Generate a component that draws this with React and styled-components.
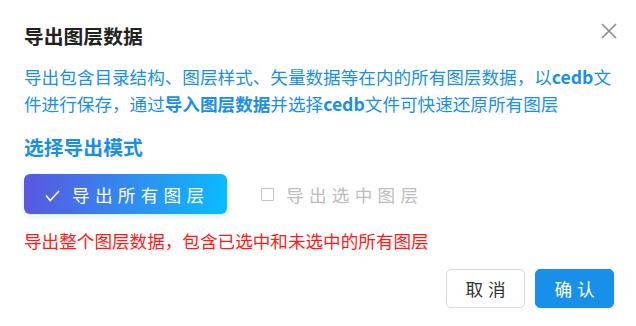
import styled, { createGlobalStyle } from "styled-components";
import { useState } from "react";

const GlobalStyle = createGlobalStyle`
  html, body {
    margin: 0;
    padding: 0;
    background: #ffffff;
  }
  body {
    font-family: "Noto Sans CJK SC", "Noto Sans", sans-serif;
  }
`;

const MODES = [
  { key: "all", label: "导出所有图层", tip: "导出整个图层数据，包含已选中和未选中的所有图层" },
  { key: "selected", label: "导出选中图层", tip: "仅导出当前选中的图层数据" },
];

const App = () => {
  const [mode, setMode] = useState("all");
  const current = MODES.find((m) => m.key === mode);

  return (
    <>
      <GlobalStyle />
      <DialogStyled>
        <Header>
          <Title>导出图层数据</Title>
          <CloseBtn aria-label="close">
            <svg width="16" height="16" viewBox="0 0 16 16">
              <path
                d="M1 1 L15 15 M15 1 L1 15"
                stroke="#8a8a8a"
                strokeWidth="1.6"
                fill="none"
              />
            </svg>
          </CloseBtn>
        </Header>

        <Desc>
          导出包含目录结构、图层样式、矢量数据等在内的所有图层数据，以<b>cedb</b>文
          <br />
          件进行保存，通过<b>导入图层数据</b>并选择<b>cedb</b>文件可快速还原所有图层
        </Desc>

        <SectionTitle>选择导出模式</SectionTitle>

        <ModeRow>
          {MODES.map((m) =>
            m.key === mode ? (
              <ModeActive key={m.key} onClick={() => setMode(m.key)}>
                <svg width="15" height="12" viewBox="0 0 15 12">
                  <path
                    d="M1 5.5 L5.2 10.5 L14 1"
                    stroke="#ffffff"
                    strokeWidth="1.6"
                    fill="none"
                  />
                </svg>
                <span>{m.label}</span>
              </ModeActive>
            ) : (
              <ModeOption key={m.key} onClick={() => setMode(m.key)}>
                <CheckBox />
                <span>{m.label}</span>
              </ModeOption>
            )
          )}
        </ModeRow>

        <Tip>{current.tip}</Tip>

        <Footer>
          <FooterBtn>取消</FooterBtn>
          <FooterBtn $primary>确认</FooterBtn>
        </Footer>
      </DialogStyled>
    </>
  );
};

const DialogStyled = styled.div`
  width: 636px;
  height: 326px;
  box-sizing: border-box;
  padding: 22px 22px 0 24px;
  background: #fff;
  display: flex;
  flex-direction: column;
`;

const Header = styled.div`
  display: flex;
  justify-content: space-between;
  align-items: flex-start;
  padding-right: 0;
`;

const Title = styled.div`
  font-size: 19.8px;
  line-height: 28px;
  font-weight: 700;
  color: #222;
`;

const CloseBtn = styled.button`
  border: none;
  background: none;
  padding: 0;
  margin-top: 1px;
  margin-right: -3px;
  width: 16px;
  height: 16px;
  cursor: pointer;
  display: flex;
`;

const Desc = styled.p`
  margin: 13px 0 0;
  font-size: 17.6px;
  line-height: 27px;
  color: #1a8fe6;
  white-space: nowrap;

  b {
    font-weight: 700;
  }
`;

const SectionTitle = styled.div`
  margin-top: 16px;
  font-size: 19.8px;
  line-height: 28px;
  font-weight: 700;
  color: #1a8fe6;
`;

const ModeRow = styled.div`
  margin-top: 13px;
  display: flex;
  align-items: center;
  gap: 34px;
`;

const ModeActive = styled.div`
  width: 203px;
  height: 40px;
  box-sizing: border-box;
  padding-left: 21px;
  border-radius: 6px;
  background: linear-gradient(100deg, #5b55e0 0%, #2f8ff0 55%, #07bdff 100%);
  box-shadow: 0 2px 6px rgba(20, 150, 255, 0.18);
  display: flex;
  align-items: center;
  gap: 12px;
  color: #fff;
  font-size: 17.6px;
  letter-spacing: 5.3px;
  cursor: pointer;

  svg {
    margin-top: 3px;
  }
`;

const ModeOption = styled.div`
  display: flex;
  align-items: center;
  gap: 12px;
  color: #bdbdbd;
  font-size: 17.6px;
  letter-spacing: 5.3px;
  cursor: pointer;
`;

const CheckBox = styled.span`
  width: 13px;
  height: 13px;
  box-sizing: border-box;
  border: 1.5px solid #c4c4c4;
  border-radius: 1px;
`;

const Tip = styled.div`
  margin-top: 15px;
  font-size: 17.6px;
  line-height: 24px;
  color: #ff1a1a;
`;

const Footer = styled.div`
  margin-top: 16px;
  display: flex;
  justify-content: flex-end;
  gap: 10px;
`;

const FooterBtn = styled.button`
  width: 79px;
  height: 39px;
  box-sizing: border-box;
  padding: 0 0 0 5px;
  border-radius: 5px;
  font-family: "Noto Sans CJK SC", "Noto Sans", sans-serif;
  font-size: 17.6px;
  letter-spacing: 5px;
  cursor: pointer;
  border: 1px solid ${(p) => (p.$primary ? "#1890ea" : "#d9d9d9")};
  background: ${(p) => (p.$primary ? "#1890ea" : "#fff")};
  color: ${(p) => (p.$primary ? "#fff" : "#333")};
`;

export default App;
